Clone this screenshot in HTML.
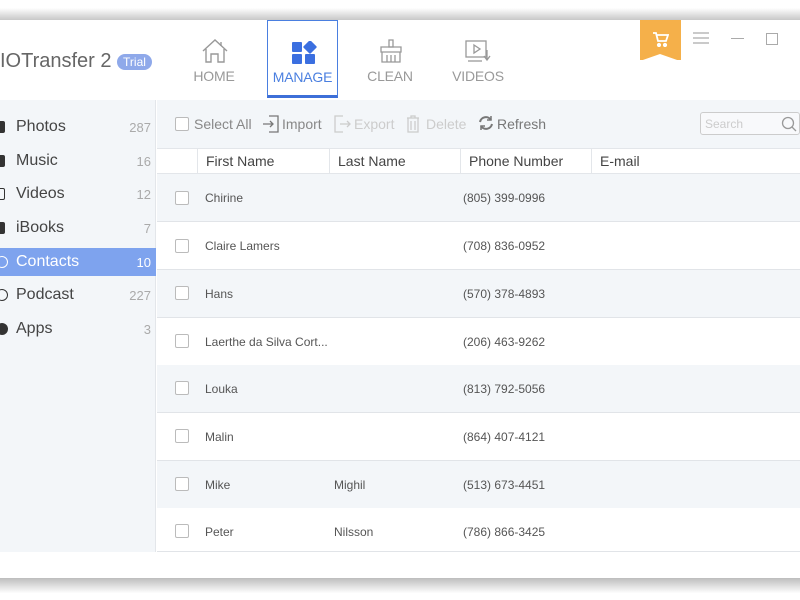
<!DOCTYPE html>
<html><head><style>
*{margin:0;padding:0;box-sizing:border-box}
body{width:800px;height:600px;background:#fff;font-family:"Liberation Sans",sans-serif;position:relative;overflow:hidden;color:#444}
.shadowtop{position:absolute;left:0;top:0;width:800px;height:20px;background:linear-gradient(#fff 40%,#c8c8c8)}
.win{position:absolute;left:0;top:20px;width:800px;height:558px;background:#fff}
.shadowbot{position:absolute;left:0;top:578px;width:800px;height:22px;background:linear-gradient(#bdbdbd,#fff 70%)}
.abs{position:absolute}
.nav{position:absolute;top:20px;height:78px;text-align:center;font-size:14px;color:#999;letter-spacing:-0.2px}
.nav span{position:absolute;left:0;right:0;top:48px}
.side{position:absolute;left:0;top:100px;width:156px;height:452px;background:#f3f6f9;border-right:1px solid #e3e6ea}
.si{position:absolute;left:0;width:156px;height:28px;font-size:16px;color:#444}
.si b{font-weight:normal;position:absolute;left:16px;top:5px}
.si i{font-style:normal;position:absolute;right:5px;top:7px;font-size:13px;color:#aaa}
.si .ic{position:absolute;left:-4px;top:8px;width:9px;height:12px;background:#333;border-radius:2px}
.tb{position:absolute;left:157px;top:100px;width:643px;height:48px;background:#f3f6f9}
.cb{position:absolute;width:14px;height:14px;border:1px solid #bbb;background:#fff;border-radius:2px}
.hdr{position:absolute;left:157px;top:148px;width:643px;height:26px;background:#fff;border-top:1px solid #e3e6ea;border-bottom:1px solid #e3e6ea;font-size:14px;color:#444}
.hdr div{position:absolute;top:0;height:25px;border-left:1px solid #e3e6ea;padding:4px 0 0 8px}
.row{position:absolute;left:157px;width:643px;height:48px;border-bottom:1px solid #e1e4e8;font-size:12px;color:#555}
.row span{position:absolute;top:17px}
</style></head><body>
<div class="shadowtop"></div>
<div class="win"></div>
<div class="shadowbot"></div>

<div class="abs" style="left:0;top:50px;font-size:20px;color:#666">IOTransfer 2</div>
<div class="abs" style="left:117px;top:54px;width:35px;height:16px;border-radius:8px;background:#8fa9ea;color:#fff;font-size:12px;text-align:center;line-height:16px">Trial</div>

<div class="nav" style="left:186px;width:56px">
<svg class="abs" style="left:15px;top:18px" width="28" height="26" viewBox="0 0 28 26" fill="none" stroke="#999" stroke-width="1.4"><path d="M2 13 L14 2 L26 13"/><path d="M20 4 V8"/><path d="M5 11 V24 H10 V16 H17 V24 H23 V11"/></svg>
<span>HOME</span></div>
<div class="nav" style="left:267px;width:71px;border:1px solid #4a7fe0;border-bottom:3px solid #3d6fd8;color:#4a7fe0;background:#fff">
<svg class="abs" style="left:23px;top:20px" width="26" height="24" viewBox="0 0 26 24" fill="#3b6fe0"><rect x="1" y="1" width="10" height="10" rx="1"/><rect x="14" y="1" width="10" height="10" rx="1" transform="rotate(45 19 6)"/><rect x="1" y="13" width="10" height="10" rx="1"/><rect x="14" y="13" width="10" height="10" rx="1"/></svg>
<span>MANAGE</span></div>
<div class="nav" style="left:362px;width:56px">
<svg class="abs" style="left:16px;top:18px" width="26" height="26" viewBox="0 0 26 26" fill="none" stroke="#999" stroke-width="1.3"><path d="M11 2 H15 V9 H11Z"/><path d="M3 9 H23 V14 H3Z"/><path d="M4 14 V24 H22 V14 M9 17 V24 M13 17 V24 M17 17 V24"/></svg>
<span>CLEAN</span></div>
<div class="nav" style="left:450px;width:56px">
<svg class="abs" style="left:14px;top:20px" width="30" height="24" viewBox="0 0 30 24" fill="none" stroke="#999" stroke-width="1.3"><rect x="2" y="1" width="20" height="16"/><path d="M10 5 L16 9 L10 13Z"/><path d="M4 21 H18"/><path d="M23 10 V19 M20 16 L23 20 L26 16"/></svg>
<span>VIDEOS</span></div>

<div class="abs" style="left:640px;top:20px;width:41px;height:40px;background:#f5b04a"></div>
<div class="abs" style="left:640px;top:54px;width:0;height:0;border-left:20.5px solid transparent;border-right:20.5px solid transparent;border-bottom:7px solid #fff"></div>
<svg class="abs" style="left:652px;top:32px" width="17" height="15" viewBox="0 0 17 15" fill="none" stroke="#fff" stroke-width="1.8"><path d="M1 1 H4 L6 9 H14 L16 3 H5"/><circle cx="7" cy="13" r="1.2" fill="#fff"/><circle cx="13" cy="13" r="1.2" fill="#fff"/></svg>
<svg class="abs" style="left:693px;top:32px" width="16" height="12"><path d="M0 1H16M0 6H16M0 11H16" stroke="#aaa" stroke-width="1.2"/></svg>
<div class="abs" style="left:731px;top:38px;width:13px;height:1px;background:#aaa"></div>
<div class="abs" style="left:766px;top:33px;width:12px;height:12px;border:1px solid #aaa"></div>

<div class="side">
<div class="si" style="top:13px"><div class="ic"></div><b>Photos</b><i>287</i></div>
<div class="si" style="top:47px"><div class="ic"></div><b>Music</b><i>16</i></div>
<div class="si" style="top:80px"><div class="ic" style="background:none;border:1.5px solid #333"></div><b>Videos</b><i>12</i></div>
<div class="si" style="top:114px"><div class="ic"></div><b>iBooks</b><i>7</i></div>
<div class="si" style="top:148px;background:#7ea3ee;color:#fff"><div class="ic" style="background:none;border:1.5px solid #fff;border-radius:50%;width:12px"></div><b>Contacts</b><i style="color:#fff">10</i></div>
<div class="si" style="top:181px"><div class="ic" style="background:none;border:1.5px solid #333;border-radius:50%;width:12px"></div><b>Podcast</b><i>227</i></div>
<div class="si" style="top:215px"><div class="ic" style="border-radius:50%;width:12px"></div><b>Apps</b><i>3</i></div>
</div>

<div class="tb">
<div class="cb" style="left:18px;top:17px"></div>
<div class="abs" style="left:37px;top:16px;font-size:14px;color:#888">Select All</div>
<svg class="abs" style="left:105px;top:14px" width="18" height="20" viewBox="0 0 18 20" fill="none" stroke="#777" stroke-width="1.3"><path d="M7 2 H16 V18 H7"/><path d="M1 10 H11 M8 7 L11 10 L8 13"/></svg>
<div class="abs" style="left:125px;top:16px;font-size:14px;color:#888">Import</div>
<svg class="abs" style="left:176px;top:14px" width="18" height="20" viewBox="0 0 18 20" fill="none" stroke="#ccc" stroke-width="1.3"><path d="M10 2 H2 V18 H10"/><path d="M7 10 H17 M14 7 L17 10 L14 13"/></svg>
<div class="abs" style="left:197px;top:16px;font-size:14px;color:#ccc">Export</div>
<svg class="abs" style="left:249px;top:15px" width="14" height="18" viewBox="0 0 14 18" fill="none" stroke="#ccc" stroke-width="1.3"><path d="M1 3 H13 M5 3 V1 H9 V3 M2 3 V17 H12 V3 M5 6 V15 M9 6 V15"/></svg>
<div class="abs" style="left:269px;top:16px;font-size:14px;color:#ccc">Delete</div>
<svg class="abs" style="left:321px;top:15px" width="16" height="16" viewBox="0 0 16 16" fill="none" stroke="#777" stroke-width="2"><path d="M2 7 A6 6 0 0 1 13 5 M14 9 A6 6 0 0 1 3 11"/><path d="M13 1 V5 H9 M3 15 V11 H7" stroke-width="1.5"/></svg>
<div class="abs" style="left:340px;top:16px;font-size:14px;color:#777">Refresh</div>
<div class="abs" style="left:543px;top:12px;width:100px;height:23px;border:1px solid #ccc;border-radius:3px;background:#f8f9fb;font-size:12px;color:#ccc;padding:4px 0 0 4px">Search</div>
<svg class="abs" style="left:624px;top:16px" width="16" height="16" fill="none" stroke="#999" stroke-width="1.3"><circle cx="7" cy="7" r="5.5"/><path d="M11 11 L15 15"/></svg>
</div>

<div class="hdr">
<div style="left:40px;width:132px">First Name</div>
<div style="left:172px;width:131px">Last Name</div>
<div style="left:303px;width:131px">Phone Number</div>
<div style="left:434px;width:209px">E-mail</div>
</div>

<div class="row" style="top:174px;background:#f3f6f9"><div class="cb" style="left:18px;top:17px"></div><span style="left:48px">Chirine</span><span style="left:306px">(805) 399-0996</span></div>
<div class="row" style="top:222px;background:#fff"><div class="cb" style="left:18px;top:17px"></div><span style="left:48px">Claire Lamers</span><span style="left:306px">(708) 836-0952</span></div>
<div class="row" style="top:270px;background:#f3f6f9"><div class="cb" style="left:18px;top:16px"></div><span style="left:48px">Hans</span><span style="left:306px">(570) 378-4893</span></div>
<div class="row" style="top:318px;background:#fff"><div class="cb" style="left:18px;top:16px"></div><span style="left:48px">Laerthe da Silva Cort...</span><span style="left:306px">(206) 463-9262</span></div>
<div class="row" style="top:365px;background:#f3f6f9"><div class="cb" style="left:18px;top:16px"></div><span style="left:48px">Louka</span><span style="left:306px">(813) 792-5056</span></div>
<div class="row" style="top:413px;background:#fff"><div class="cb" style="left:18px;top:16px"></div><span style="left:48px">Malin</span><span style="left:306px">(864) 407-4121</span></div>
<div class="row" style="top:461px;background:#f3f6f9"><div class="cb" style="left:18px;top:16px"></div><span style="left:48px">Mike</span><span style="left:177px">Mighil</span><span style="left:306px">(513) 673-4451</span></div>
<div class="row" style="top:508px;background:#fff;height:44px;border-bottom:1px solid #e1e4e8"><div class="cb" style="left:18px;top:16px"></div><span style="left:48px">Peter</span><span style="left:177px">Nilsson</span><span style="left:306px">(786) 866-3425</span></div>
</body></html>
